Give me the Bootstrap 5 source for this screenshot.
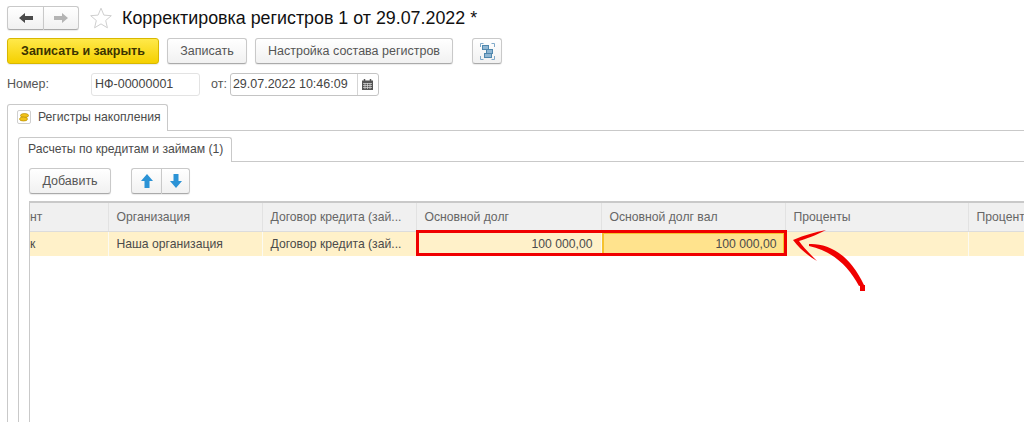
<!DOCTYPE html>
<html lang="ru">
<head>
  <meta charset="UTF-8" />
  <meta name="viewport" content="width=device-width, initial-scale=1.0"/>
  <title>Корректировка регистров</title>
  <link href="https://cdn.jsdelivr.net/npm/bootstrap@5.3.3/dist/css/bootstrap.min.css" rel="stylesheet" />
  <style>
    html, body { height: 100%; }
    body {
      overflow: hidden;
      font-family: "Liberation Sans", Arial, sans-serif;
      font-size: 12.5px;
      color: #4b4b4b;
      background: #fff;
    }
    .doc-page { position: relative; height: 422px; padding: 6px 0 0 7px; }
    .doc-title { font-size: 17.85px; line-height: 24px; color: #111; margin: 0 0 0 10px; font-weight: 400; }
    .star-icon { margin-left: 11px; }

    .btn-1c {
      height: 26px; padding: 0; font-size: 12.5px; line-height: 22px; color: #555;
      background: linear-gradient(#fff, #f1f1f1);
      border: 1px solid #c9c9c9; border-bottom-color: #aaa; border-radius: 3px;
      box-shadow: 0 1px 1px rgba(0,0,0,.08);
    }
    .btn-1c:hover { color: #555; background: #f1f1f1; border-color: #c9c9c9; }
    .btn-save { width: 152px; font-weight: 700; color: #3c3400; background: linear-gradient(#ffe94a, #f5d000); border-color: #d8b800; }
    .btn-write { width: 80px; margin-left: 8px; }
    .btn-setup { width: 198px; margin-left: 8px; }
    .btn-struct { width: 30px; margin-left: 19px; }
    .btn-add { width: 82px; }
    .group-1c { display: flex; }
    .group-1c .btn-1c { display: flex; align-items: center; justify-content: center; }
    .group-1c .btn-1c:first-child { border-radius: 3px 0 0 3px; border-right: 0; }
    .group-1c .btn-1c:last-child { border-radius: 0 3px 3px 0; }
    .nav-group .btn-1c { width: 36px; height: 24px; }
    .move-group { margin-left: 20px; }
    .move-group .btn-1c { width: 30px; }
    .move-group .btn-1c:last-child { width: 29px; border-left: 1px solid #c9c9c9; }

    .toolbar-row { margin-top: 8px; }
    .field-row { margin-top: 9px; height: 23px; }
    .field-label { width: 84px; color: #555; }
    .field-input {
      height: 23px; line-height: 21px; padding: 0 3px; color: #444;
      border: 1px solid #e3e3e3; border-radius: 3px;
    }
    .num-input { width: 109px; padding-left: 3px; }
    .date-label { margin: 0 3px 0 11px; color: #555; }
    .date-input { width: 149px; display: flex; padding: 0; border-color: #c4c4c4; }
    .date-input span { flex: 1; padding-left: 2px; }
    .date-input i { width: 21px; border-left: 1px solid #d5d5d5; display: flex; align-items: center; justify-content: center; }

    .tabs-1c { border: 0; flex-wrap: nowrap; }
    .tabs-1c .nav-link, .tabs-1c .nav-link.active {
      height: 27px; padding: 0 8px 2px 9px; display: flex; align-items: center; gap: 7px;
      color: #4b4b4b; font-size: 12.2px; background: #fff; white-space: nowrap;
      border: 1px solid #c9c9c9; border-bottom: 0; border-radius: 3px 3px 0 0; margin: 0 0 -1px;
      position: relative;
    }
    .outer-tabs { margin-top: 8px; }
    .outer-tabs .nav-link { width: 161px; }
    .outer-panel { border-left: 1px solid #c9c9c9; border-top: 1px solid #c9c9c9; padding: 6px 0 0 10px; height: 293px; }
    .inner-tabs .nav-link, .inner-tabs .nav-link.active { width: 214px; height: 25px; }
    .inner-panel { border-left: 1px solid #c9c9c9; border-top: 1px solid #c9c9c9; padding: 6px 0 0 10px; height: 262px; }
    .tab-mark { width: 14px; height: 14px; flex: none; border: 1px solid #cfcfcf; background: #fff; border-radius: 2px; display: flex; align-items: center; justify-content: center; }

    .grid-wrap { margin-top: 7px; border-top: 2px solid #c9c9c9; border-left: 1px solid #c9c9c9; height: 240px; overflow: hidden; }
    .grid-1c { table-layout: fixed; border-collapse: collapse; width: 1100px; color: #4b4b4b; font-size: 12.2px; }
    .grid-1c th, .grid-1c td {
      padding: 0 8px; font-weight: 400; white-space: nowrap; overflow: hidden;
      border-right: 1px solid #e2e2e2;
    }
    .grid-1c th { height: 28px; background: #f0f0f0; color: #666; border-bottom: 1px solid #dcdcdc; }
    .grid-1c td { height: 25px; background: #fff1c9; border-right-color: #fbfaf2; }
    .grid-1c td.cell-first, .grid-1c th.cell-first { text-align: right; padding-right: 67px; padding-left: 0; }
    .grid-1c td.cell-first { padding-right: 75px; }
    .grid-1c td.cell-num { text-align: right; }
    .grid-1c td.cell-active { background: #ffe38d; box-shadow: inset 0 0 0 2px #f5c22e; }

    .red-frame { position: absolute; left: 416px; top: 230px; width: 371px; height: 26px; border: 3px solid #f00000; pointer-events: none; }
    .red-arrow { position: absolute; left: 785px; top: 225px; }
  </style>
</head>
<body>
  <div class="doc-page">
    <div class="d-flex align-items-center">
      <div class="group-1c nav-group">
        <button class="btn btn-1c" type="button">
          <svg width="14" height="10" viewBox="0 0 14 10"><path d="M0 5 6 0v3h8v4H6v3z" fill="#4a4a4a"/></svg>
        </button>
        <button class="btn btn-1c" type="button">
          <svg width="14" height="10" viewBox="0 0 14 10"><path d="M14 5 8 0v3H0v4h8v3z" fill="#b4b4b4"/></svg>
        </button>
      </div>
      <svg class="star-icon" width="22" height="22" viewBox="0 0 22 22"><path d="M11 1.200l2.900 6.900 7.400.6-5.600 4.800 1.700 7.300L11 16.900l-6.400 3.900 1.700-7.300L.7 8.700l7.400-.6z" fill="#fff" stroke="#cfcfcf"/></svg>
      <h1 class="doc-title">Корректировка регистров 1 от 29.07.2022 *</h1>
    </div>

    <div class="d-flex align-items-center toolbar-row">
      <button class="btn btn-1c btn-save" type="button">Записать и закрыть</button>
      <button class="btn btn-1c btn-write" type="button">Записать</button>
      <button class="btn btn-1c btn-setup" type="button">Настройка состава регистров</button>
      <button class="btn btn-1c btn-struct d-flex align-items-center justify-content-center" type="button">
        <svg width="15" height="17" viewBox="0 0 15 17" fill="none">
          <path d="M.5 4V.5h3M14.5 13v3.500h-3M.5 13v3.500h3M14.500 4V.500h-3" stroke="#7fa9c9"/>
          <rect x="2.500" y="2.500" width="6" height="4" fill="#8fb6d3" stroke="#4f87ad"/>
          <rect x="6.500" y="6.500" width="6" height="4" fill="#8fb6d3" stroke="#4f87ad"/>
          <rect x="4.500" y="10.500" width="7" height="4" fill="#8fb6d3" stroke="#4f87ad"/>
        </svg>
      </button>
    </div>

    <div class="d-flex align-items-center field-row">
      <span class="field-label">Номер:</span>
      <div class="field-input num-input">НФ-00000001</div>
      <span class="date-label">от:</span>
      <div class="field-input date-input">
        <span>29.07.2022 10:46:09</span>
        <i>
          <svg width="11" height="11" viewBox="0 0 11 11"><path d="M0 1.500h11V11H0z" fill="#555"/><path d="M2.500 0v2M8.500 0v2" stroke="#555" stroke-width="1.500"/><path d="M1 4.500h9M1 6.500h9M1 8.500h9M3 4v6M5.500 4v6M8 4v6" stroke="#ddd" stroke-width=".7"/></svg>
        </i>
      </div>
    </div>

    <ul class="nav nav-tabs tabs-1c outer-tabs">
      <li class="nav-item">
        <a class="nav-link active" href="#">
          <span class="tab-mark">
            <svg width="10" height="9" viewBox="0 0 10 9"><ellipse cx="5.500" cy="2.500" rx="4" ry="2" fill="#f2c21a" stroke="#b98f00" stroke-width=".7"/><ellipse cx="4.500" cy="6" rx="4" ry="2" fill="#f2c21a" stroke="#b98f00" stroke-width=".7"/></svg>
          </span>
          Регистры накопления
        </a>
      </li>
    </ul>
    <div class="outer-panel">
      <ul class="nav nav-tabs tabs-1c inner-tabs">
        <li class="nav-item"><a class="nav-link active" href="#">Расчеты по кредитам и займам (1)</a></li>
      </ul>
      <div class="inner-panel">
        <div class="d-flex">
          <button class="btn btn-1c btn-add" type="button">Добавить</button>
          <div class="group-1c move-group">
            <button class="btn btn-1c" type="button">
              <svg width="12" height="14" viewBox="0 0 12 14"><path d="M6 0l6 7H8.500v7h-5V7H0z" fill="#2b93d6"/></svg>
            </button>
            <button class="btn btn-1c" type="button">
              <svg width="12" height="14" viewBox="0 0 12 14"><path d="M6 14l6-7H8.500V0h-5v7H0z" fill="#2b93d6"/></svg>
            </button>
          </div>
        </div>

        <div class="grid-wrap">
          <table class="grid-1c">
            <colgroup>
              <col style="width:78px"><col style="width:154px"><col style="width:154px"><col style="width:185px"><col style="width:184px"><col style="width:183px"><col style="width:162px">
            </colgroup>
            <thead>
              <tr>
                <th class="cell-first">нт</th>
                <th>Организация</th>
                <th>Договор кредита (зай...</th>
                <th>Основной долг</th>
                <th>Основной долг вал</th>
                <th>Проценты</th>
                <th>Проценты вал</th>
              </tr>
            </thead>
            <tbody>
              <tr>
                <td class="cell-first">к</td>
                <td>Наша организация</td>
                <td>Договор кредита (зай...</td>
                <td class="cell-num">100 000,00</td>
                <td class="cell-num cell-active">100 000,00</td>
                <td></td>
                <td></td>
              </tr>
            </tbody>
          </table>
        </div>
      </div>
    </div>

    <div class="red-frame"></div>
    <svg class="red-arrow" width="85" height="70" viewBox="0 0 85 70">
      <path d="M8 15 C20 10 30 7 41 5 C32 10 20 14 14 16 C18 22 25 29 32 36 C23 31 14 23 8 15Z" fill="#f00000"/>
      <path d="M24 19 C42 18 64 28 79 60 L74 61 C64 42 48 26 24 21Z" fill="#f00000"/>
      <rect x="75" y="60" width="5" height="6" fill="#f00000"/>
    </svg>
  </div>

  <script src="https://cdn.jsdelivr.net/npm/bootstrap@5.3.3/dist/js/bootstrap.bundle.min.js"></script>
</body>
</html>
